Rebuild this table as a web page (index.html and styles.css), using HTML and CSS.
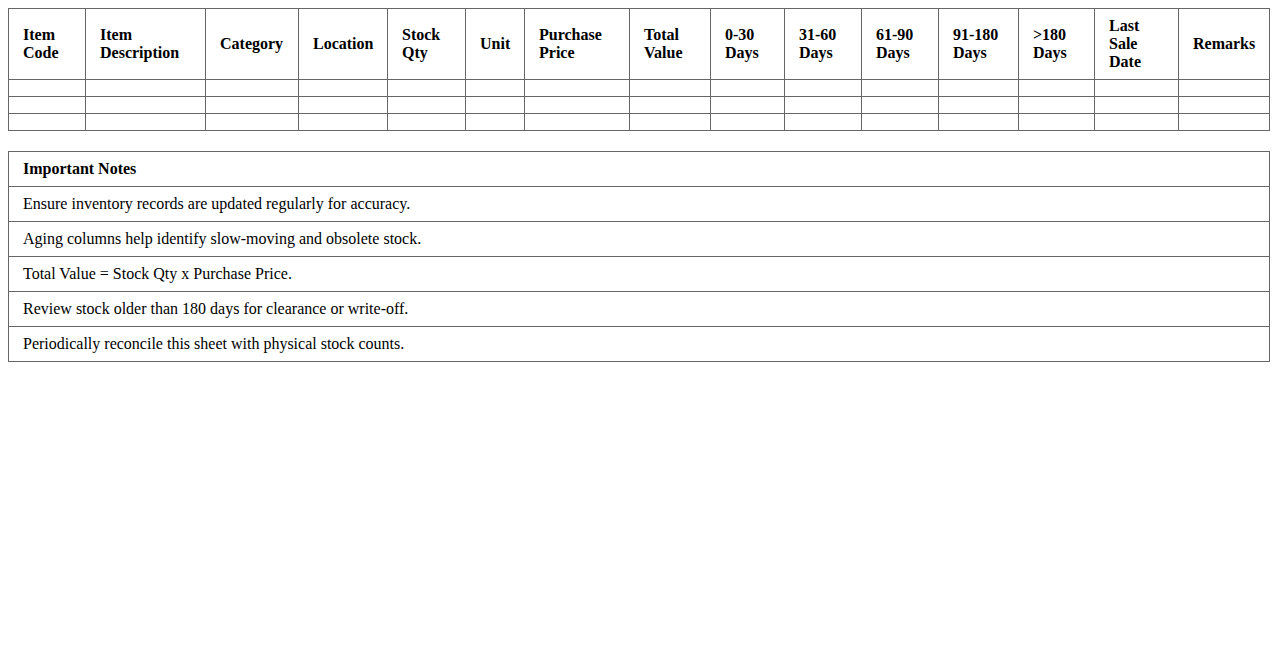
FILE: index.html
```html
<!DOCTYPE html>
<html lang="en">
<head>
<meta charset="utf-8">
<title>Inventory Aging Sheet</title>
<link rel="stylesheet" href="styles.css">
</head>
<body>
<table class="sheet">
  <colgroup>
    <col class="c77"><col class="c120"><col class="c93"><col class="c89"><col class="c78"><col class="c59"><col class="c105"><col class="c81"><col class="c74"><col class="c77"><col class="c77"><col class="c80"><col class="c76"><col class="c84"><col class="c91">
  </colgroup>
  <thead>
    <tr>
      <th>Item<br>Code</th>
      <th>Item<br>Description</th>
      <th>Category</th>
      <th>Location</th>
      <th>Stock<br>Qty</th>
      <th>Unit</th>
      <th>Purchase<br>Price</th>
      <th>Total<br>Value</th>
      <th>0-30<br>Days</th>
      <th>31-60<br>Days</th>
      <th>61-90<br>Days</th>
      <th>91-180<br>Days</th>
      <th>&gt;180<br>Days</th>
      <th>Last<br>Sale<br>Date</th>
      <th>Remarks</th>
    </tr>
  </thead>
  <tbody>
    <tr><td></td><td></td><td></td><td></td><td></td><td></td><td></td><td></td><td></td><td></td><td></td><td></td><td></td><td></td><td></td></tr>
    <tr><td></td><td></td><td></td><td></td><td></td><td></td><td></td><td></td><td></td><td></td><td></td><td></td><td></td><td></td><td></td></tr>
    <tr><td></td><td></td><td></td><td></td><td></td><td></td><td></td><td></td><td></td><td></td><td></td><td></td><td></td><td></td><td></td></tr>
  </tbody>
</table>

<table class="notes">
  <thead>
    <tr><th>Important Notes</th></tr>
  </thead>
  <tbody>
    <tr><td>Ensure inventory records are updated regularly for accuracy.</td></tr>
    <tr><td>Aging columns help identify slow-moving and obsolete stock.</td></tr>
    <tr><td>Total Value = Stock Qty x Purchase Price.</td></tr>
    <tr><td>Review stock older than 180 days for clearance or write-off.</td></tr>
    <tr><td>Periodically reconcile this sheet with physical stock counts.</td></tr>
  </tbody>
</table>
</body>
</html>
```

FILE: styles.css
```css
html, body {
  background: #ffffff;
}
body {
  margin: 8px;
  font-family: "Liberation Serif", "Times New Roman", serif;
  font-size: 16px;
  color: #000;
}
table {
  width: 100%;
  border-collapse: collapse;
}
.sheet {
  table-layout: fixed;
}
th, td {
  border: 1px solid #666;
  padding: 8px 14px;
  text-align: left;
  vertical-align: middle;
}
th {
  font-weight: bold;
}
.notes {
  margin-top: 20px;
}
.c77 { width: 77px; }
.c120 { width: 120px; }
.c93 { width: 93px; }
.c89 { width: 89px; }
.c78 { width: 78px; }
.c59 { width: 59px; }
.c105 { width: 105px; }
.c81 { width: 81px; }
.c74 { width: 74px; }
.c80 { width: 80px; }
.c76 { width: 76px; }
.c84 { width: 84px; }
.c91 { width: 91px; }
```
